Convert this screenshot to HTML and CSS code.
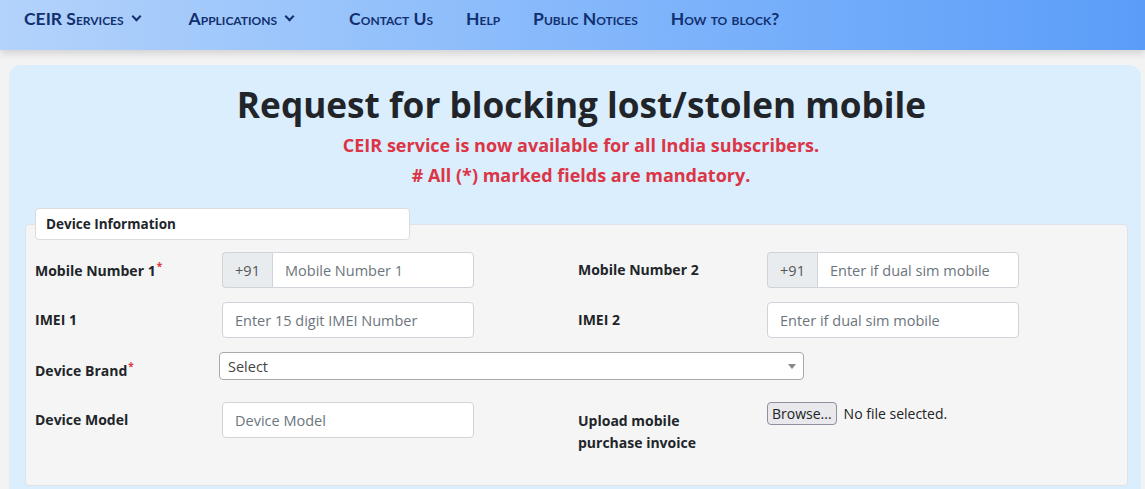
FILE: index.html
```html
<!DOCTYPE html>
<html>
<head>
<link rel="stylesheet" href="styles.css">
</head>
<body>
<div class="topnav">
  <a class="navlink" href="#">CEIR Services <span class="caret"></span></a>
  <a class="navlink wide" href="#">Applications <span class="caret"></span></a>
  <a class="navlink" href="#">Contact Us</a>
  <a class="navlink" href="#">Help</a>
  <a class="navlink" href="#">Public Notices</a>
  <a class="navlink" href="#">How to block?</a>
</div>

<div class="card">
  <h1>Request for blocking lost/stolen mobile</h1>
  <p class="notice">CEIR service is now available for all India subscribers.</p>
  <p class="notice"># All (*) marked fields are mandatory.</p>

  <div class="fieldset">
    <div class="legend">Device Information</div>

    <div class="formgrid">
      <label for="mob1">Mobile Number 1<sup>*</sup></label>
      <div class="inputgroup">
        <span class="addon">+91</span>
        <input type="text" id="mob1" placeholder="Mobile Number 1">
      </div>
      <span></span>
      <label for="mob2">Mobile Number 2</label>
      <div class="inputgroup">
        <span class="addon">+91</span>
        <input type="text" id="mob2" placeholder="Enter if dual sim mobile">
      </div>

      <label for="imei1">IMEI 1</label>
      <input type="text" id="imei1" placeholder="Enter 15 digit IMEI Number">
      <span></span>
      <label for="imei2">IMEI 2</label>
      <input type="text" id="imei2" placeholder="Enter if dual sim mobile">

      <label for="brand">Device Brand<sup>*</sup></label>
      <div class="selectbox">
        <span>Select</span>
        <span class="arrow"></span>
      </div>

      <label for="model">Device Model</label>
      <input type="text" id="model" placeholder="Device Model">
      <span></span>
      <label class="upload">Upload mobile<br>purchase invoice</label>
      <div class="filepick">
        <span class="browse">Browse...</span>
        <span>No file selected.</span>
      </div>
    </div>
  </div>
</div>
</body>
</html>
```

FILE: styles.css
```css
body {
  margin: 0;
  background: #f3f3f3;
  font-family: "Open Sans", "Noto Sans", sans-serif;
  color: #212529;
}
.topnav {
  height: 50px;
  box-sizing: border-box;
  display: flex;
  align-items: flex-start;
  padding: 8px 0 0 24px;
  background: linear-gradient(to right, #b3d3fb, #85b8fb 50%, #5a9df9);
  box-shadow: 0 3px 8px rgba(0, 0, 0, 0.15);
}
.navlink {
  font-family: "Lato", sans-serif;
  font-variant: small-caps;
  font-weight: 700;
  font-size: 17.5px;
  color: #11306f;
  text-decoration: none;
  margin-right: 33px;
  display: flex;
  align-items: center;
}
.navlink.wide {
  margin-left: 16px;
  margin-right: 56px;
}
.caret {
  display: inline-block;
  width: 5px;
  height: 5px;
  border-right: 2px solid #11306f;
  border-bottom: 2px solid #11306f;
  transform: rotate(45deg);
  margin: -4px 0 0 9px;
}
.card {
  margin: 15px 4px 0 9px;
  background: #daeefe;
  border-radius: 12px;
  padding: 14px 13px 20px 16px;
}
h1 {
  margin: 0;
  padding-left: 10px;
  text-align: center;
  font-size: 35.2px;
  font-weight: 700;
  line-height: 50px;
  color: #212529;
}
.notice {
  margin: 0;
  padding-left: 9px;
  text-align: center;
  color: #dc3545;
  font-weight: 700;
  font-size: 18px;
  line-height: 30px;
}
.notice:first-of-type {
  margin-top: 1px;
}
.fieldset {
  position: relative;
  margin-top: 34px;
  background: #f5f5f5;
  border: 1px solid #dde3e8;
  border-radius: 4px;
  padding: 27px 10px 47px 9px;
}
.legend {
  position: absolute;
  top: -17px;
  left: 9px;
  width: 363px;
  height: 30px;
  background: #fff;
  border: 1px solid #dcdcdc;
  border-radius: 4px;
  padding-left: 10px;
  font-size: 13.5px;
  font-weight: 700;
  line-height: 30px;
}
.formgrid {
  display: grid;
  grid-template-columns: 187px 252px 104px 189px 252px;
  grid-auto-rows: 36px;
  row-gap: 14px;
  align-items: center;
}
label {
  font-weight: 700;
  font-size: 14px;
  padding-bottom: 1px;
}
sup {
  color: #dc3545;
  font-size: 10px;
  margin-left: 1px;
}
input {
  box-sizing: border-box;
  height: 36px;
  width: 100%;
  border: 1px solid #ced4da;
  border-radius: 4px;
  padding: 0 12px;
  font-family: "Open Sans", sans-serif;
  font-size: 14.5px;
  background: #fff;
}
input::placeholder {
  color: #6c757d;
}
.inputgroup {
  display: flex;
  height: 36px;
}
.addon {
  box-sizing: border-box;
  width: 50px;
  flex: none;
  background: #e9ecef;
  border: 1px solid #ced4da;
  border-right: none;
  border-radius: 4px 0 0 4px;
  color: #555;
  font-size: 14.5px;
  display: flex;
  align-items: center;
  justify-content: center;
}
.inputgroup input {
  border-radius: 0 4px 4px 0;
}
.selectbox {
  grid-column: 2 / 6;
  align-self: start;
  box-sizing: border-box;
  width: 585px;
  height: 28px;
  margin-left: -3px;
  background: #fff;
  border: 1px solid #aaa;
  border-radius: 4px;
  padding: 0 8px;
  font-size: 14.5px;
  color: #444;
  display: flex;
  align-items: center;
  justify-content: space-between;
}
.arrow {
  border-left: 4px solid transparent;
  border-right: 4px solid transparent;
  border-top: 5px solid #888;
  margin-right: -1px;
}
.upload {
  line-height: 22px;
  margin-top: 23px;
  padding-bottom: 0;
}
.filepick {
  align-self: start;
  display: flex;
  align-items: center;
  gap: 7px;
  font-size: 14px;
  color: #222;
}
.browse {
  box-sizing: border-box;
  height: 23px;
  padding: 0 4px;
  background: #e9e9ed;
  border: 1px solid #8f8f9d;
  border-radius: 4px;
  line-height: 21px;
}
```
